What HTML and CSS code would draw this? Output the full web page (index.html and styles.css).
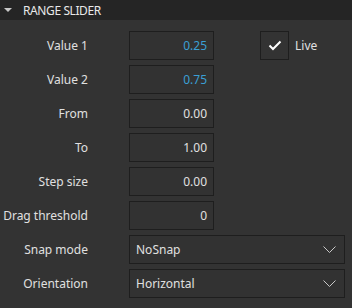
FILE: index.html
```html
<!DOCTYPE html>
<html lang="en">
<head>
	<meta charset="utf-8">
	<meta name="viewport" content="width=device-width, initial-scale=1.0">
	<link rel="stylesheet" href="styles.css">
</head>
<body>
	<div class="panel">
		<div class="panel-header">
			<span class="caret"></span>
			<span class="title">RANGE SLIDER</span>
		</div>
		<div class="props">
			<label class="prop-label">Value 1</label>
			<div class="field accent">0.25</div>
			<div class="live">
				<span class="check">
					<svg width="14" height="11" viewBox="0 0 14 11"><path d="M1.5 5.5 L5 9 L12.5 1.5" fill="none" stroke="#fff" stroke-width="2"/></svg>
				</span>
				<span class="live-text">Live</span>
			</div>

			<label class="prop-label">Value 2</label>
			<div class="field accent">0.75</div>
			<div></div>

			<label class="prop-label">From</label>
			<div class="field">0.00</div>
			<div></div>

			<label class="prop-label">To</label>
			<div class="field">1.00</div>
			<div></div>

			<label class="prop-label">Step size</label>
			<div class="field">0.00</div>
			<div></div>

			<label class="prop-label">Drag threshold</label>
			<div class="field">0</div>
			<div></div>

			<label class="prop-label">Snap mode</label>
			<div class="combo">
				<span>NoSnap</span>
				<svg width="13" height="8" viewBox="0 0 13 8"><path d="M0.5 0.5 L6.5 6.5 L12.5 0.5" fill="none" stroke="#c8c8c8" stroke-width="1"/></svg>
			</div>

			<label class="prop-label">Orientation</label>
			<div class="combo">
				<span>Horizontal</span>
				<svg width="13" height="8" viewBox="0 0 13 8"><path d="M0.5 0.5 L6.5 6.5 L12.5 0.5" fill="none" stroke="#c8c8c8" stroke-width="1"/></svg>
			</div>
		</div>
	</div>
</body>
</html>
```

FILE: styles.css
```css
body {
	margin: 0;
	background: #333333;
	font-family: "Noto Sans", "Open Sans", sans-serif;
	font-size: 12px;
	color: #e0e0e0;
}
.panel {
	width: 352px;
	height: 308px;
	background: #333333;
}
.panel-header {
	display: flex;
	align-items: center;
	height: 20px;
	background: #252525;
}
.caret {
	width: 0;
	height: 0;
	margin-left: 4px;
	margin-right: 11px;
	border-left: 4px solid transparent;
	border-right: 4px solid transparent;
	border-top: 4px solid #c8c8c8;
}
.title {
	font-size: 12px;
	letter-spacing: -0.4px;
	color: #e8e8e8;
}
.props {
	display: grid;
	grid-template-columns: 88px 85px 1fr;
	grid-auto-rows: 29px;
	column-gap: 41px;
	row-gap: 5px;
	padding: 11px 7px 0 0;
}
.props > div:nth-child(3n) {
	margin-left: 5px;
}
.prop-label {
	display: flex;
	align-items: center;
	justify-content: flex-end;
}
.field {
	display: flex;
	align-items: center;
	justify-content: flex-end;
	padding-right: 6px;
	border: 1px solid #1e1e1e;
	background: #323232;
}
.accent {
	color: #3a9fd4;
}
.live {
	display: flex;
	align-items: center;
	gap: 6px;
}
.check {
	display: flex;
	align-items: center;
	justify-content: center;
	box-sizing: border-box;
	width: 29px;
	height: 29px;
	border: 1px solid #1e1e1e;
}
.combo {
	grid-column: 2 / 4;
	display: flex;
	align-items: center;
	justify-content: space-between;
	padding: 0 8px 0 6px;
	border: 1px solid #1e1e1e;
	background: #323232;
}
```
